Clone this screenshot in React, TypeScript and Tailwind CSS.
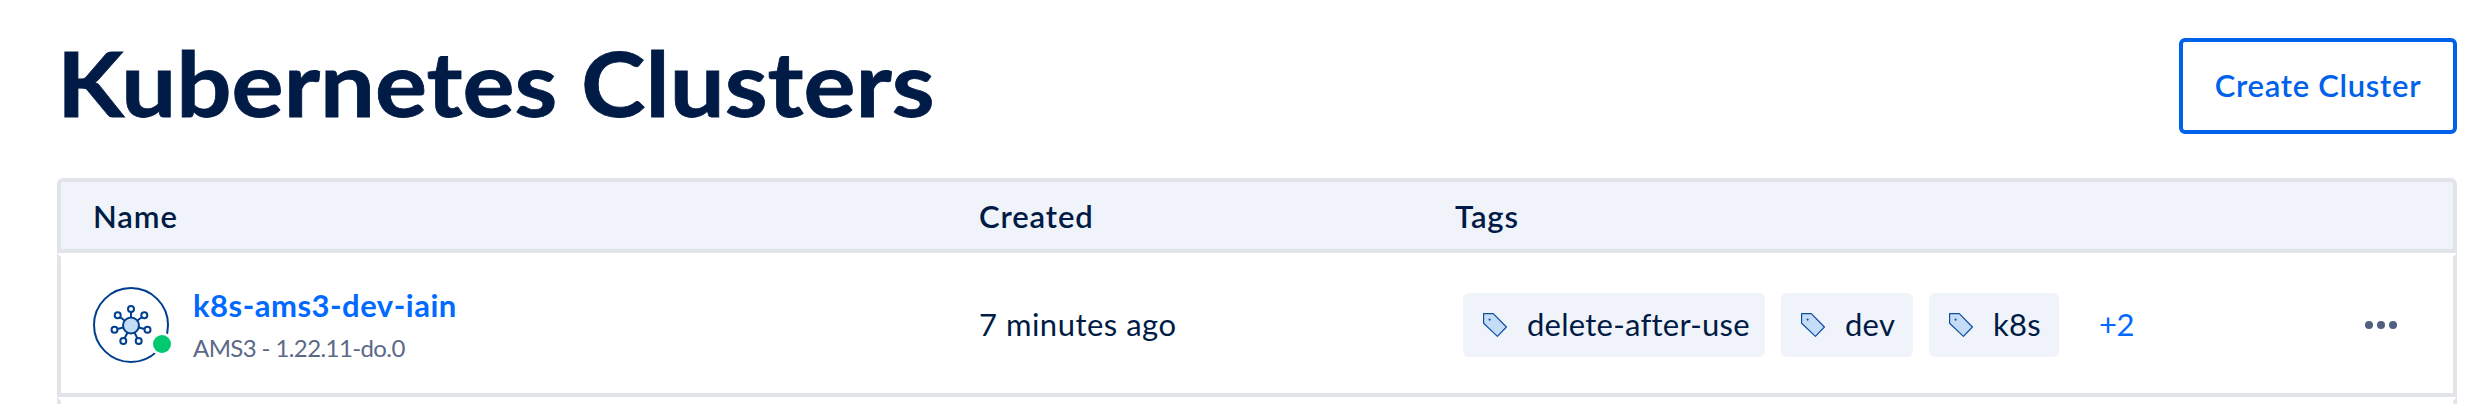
import type { ReactNode } from "react";

const GRID = "grid grid-cols-[886px_476px_1fr_auto] items-center";

function ClusterIcon() {
  const nodes = [
    [38, 22],
    [51.3, 28.3],
    [54.5, 42.8],
    [45.7, 54],
    [30.3, 54],
    [21.5, 42.8],
    [24.7, 28.3],
  ];
  return (
    <svg viewBox="0 0 80 76" className="block h-[76px] w-[80px]" fill="none">
      <circle cx="38" cy="38" r="37" stroke="#003f8e" strokeWidth="2" />
      {nodes.map(([x, y]) => (
        <path key={`${x}-${y}`} d={`M38 38.5L${x} ${y}`} stroke="#003f8e" strokeWidth="2" />
      ))}
      {nodes.map(([x, y]) => (
        <circle key={`${x}-${y}`} cx={x} cy={y} r="3" fill="#fff" stroke="#003f8e" strokeWidth="2" />
      ))}
      <circle cx="38" cy="38.5" r="8" fill="#c5dcf7" stroke="#003f8e" strokeWidth="2" />
      <circle cx="69" cy="57" r="11.5" fill="#fff" />
      <circle cx="69" cy="57" r="9" fill="#00c970" />
    </svg>
  );
}

function TagIcon() {
  return (
    <svg viewBox="0 0 24 24" className="block size-6 shrink-0" fill="none">
      <path d="M0.6 0.6H10.3L23.4 14L14.4 23.4L0.6 10.2Z" fill="#c5dcf7" stroke="#0f4f9f" strokeWidth="1.2" strokeLinejoin="round" />
      <circle cx="6.6" cy="6.6" r="1.1" fill="#0f4f9f" />
    </svg>
  );
}

function Tag({ children, className }: { children: ReactNode; className: string }) {
  return (
    <span className={`flex h-16 items-center rounded-[6px] bg-[#f0f3f9] pl-5 ${className}`}>
      <TagIcon />
      <span className="-mt-0.5 ml-5 tracking-[0.25px]">{children}</span>
    </span>
  );
}

export default function App() {
  return (
    <main className="h-[404px] w-[2482px] overflow-hidden bg-white pr-[25px] pl-[57px] font-['Lato','Open_Sans',sans-serif] text-[31px] leading-[40px] whitespace-nowrap text-[#001b45]">
      <header className="flex h-[178px] items-start justify-between">
        <h1 className="mt-[32px] origin-left scale-x-[1.083] text-[90px] leading-[100px] font-bold [-webkit-text-stroke:0.8px_#001b45]">
          Kubernetes Clusters
        </h1>
        <button className="mt-[38px] h-24 w-[278px] rounded-[6px] border-4 border-[#0061eb] pb-0.5 font-semibold tracking-[0.7px] text-[#0061eb]">
          Create Cluster
        </button>
      </header>

      <div className={`${GRID} h-[75px] rounded-t-[6px] border-4 border-[#e1e4e9] bg-[#f0f3f9] pl-8 font-semibold tracking-[0.9px]`}>
        <span>Name</span>
        <span>Created</span>
        <span>Tags</span>
      </div>

      <div className={`${GRID} h-36 border-4 border-[#e1e4e9] border-t-white pl-8`}>
        <div className="flex items-center">
          <ClusterIcon />
          <div className="mt-[3px] ml-5">
            <a className="block font-bold tracking-[0.5px] text-[#0069ff]">k8s-ams3-dev-iain</a>
            <span className="mt-[3px] block text-[24px] tracking-[-0.6px] text-[#5b6987]">AMS3 - 1.22.11-do.0</span>
          </div>
        </div>
        <span className="-mt-0.5 tracking-[0.5px]">7 minutes ago</span>
        <div className="flex items-center gap-4 pl-2">
          <Tag className="w-[302px]">delete-after-use</Tag>
          <Tag className="w-[132px]">dev</Tag>
          <Tag className="w-[130px]">k8s</Tag>
          <a className="-mt-0.5 ml-6 tracking-[-0.5px] text-[#0069ff]">+2</a>
        </div>
        <svg viewBox="0 0 32 8" className="mr-14 block h-2 w-8" fill="#4f617f">
          <circle cx="4" cy="4" r="4" />
          <circle cx="16" cy="4" r="4" />
          <circle cx="28" cy="4" r="4" />
        </svg>
      </div>

      <div className="h-36 border-4 border-[#e1e4e9] border-t-white" />
    </main>
  );
}
